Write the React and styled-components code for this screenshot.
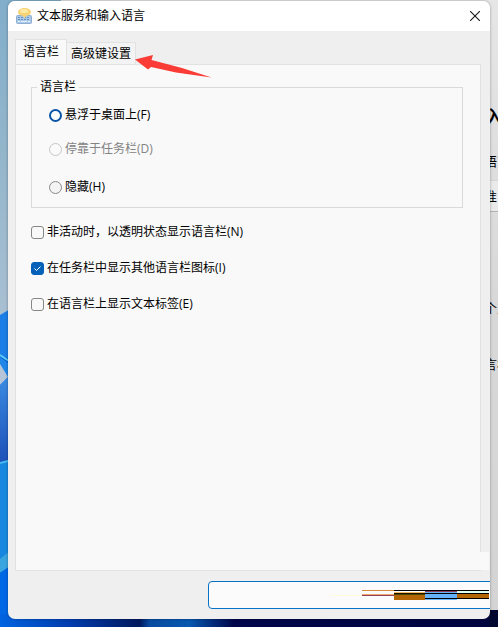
import React, { useState } from "react";
import styled, { createGlobalStyle } from "styled-components";

const GlobalStyle = createGlobalStyle`
  * {
    box-sizing: border-box;
  }
  body {
    margin: 0;
    font: 12px/16px "Open Sans", "Noto Sans CJK SC", sans-serif;
    color: #000;
  }
`;

const Desktop = styled.div`
  position: relative;
  display: flex;
  height: 100vh;
  min-height: 480px;
  padding: 1px 8px 8px;
  overflow: hidden;
  background: #0058d8;
`;

const WallpaperArt = styled.svg`
  position: absolute;
  inset: 0;
  width: 100%;
  height: 100%;
`;

// the settings window behind the dialog

const SettingsWindow = styled.div`
  position: absolute;
  top: 0;
  right: 0;
  bottom: 17px;
  left: 61px;
  display: flex;
  flex-direction: column;
  align-items: flex-end;
  overflow: hidden;
  background: linear-gradient(to bottom, #e6e6e6 0%, #d8d8d8 50%, #d4d4d4 100%);
`;

const SettingsText = styled.span`
  width: 14px;
  margin-top: ${(props) => props.$gap || 0}px;
  font-size: 13px;
  line-height: 20px;
  white-space: nowrap;
`;

const SettingsHeading = styled(SettingsText)`
  width: 14px;
  font-size: 20px;
  font-weight: 500;
  line-height: 28px;
`;

const SettingsField = styled.div`
  display: flex;
  justify-content: flex-end;
  align-items: center;
  width: 60px;
  height: 32px;
  margin-top: 9px;
  background: #eaeaea;
  border-top: 1px solid #d4d4d4;
  border-bottom: 1px solid #b4b4b4;
`;

// dialog

const Dialog = styled.section`
  position: relative;
  display: flex;
  flex: 1;
  flex-direction: column;
  overflow: hidden;
  background: #efefef;
  border-radius: 7px;
  box-shadow: 0 0 3px rgba(0, 0, 0, 0.35);
`;

const TitleBar = styled.header`
  display: flex;
  align-items: center;
  height: 30px;
  padding: 0 8px;
  background: #fff;
`;

const Title = styled.h1`
  flex: 1;
  margin: 0 0 0 5px;
  font-size: 12px;
  font-weight: 400;
`;

const CloseButton = styled.button`
  display: flex;
  padding: 2px;
  background: none;
  border: 0;
`;

const TabList = styled.div`
  position: relative;
  display: flex;
  align-items: flex-end;
  height: 33px;
  margin: 0 7px;
`;

const Tab = styled.button`
  height: ${(props) => (props.$active ? 25 : 22)}px;
  padding: ${(props) => (props.$active ? "0 7px 1px" : "0 4px")};
  background: ${(props) => (props.$active ? "#f9f9f9" : "#f3f3f3")};
  border: 1px solid #e2e2e2;
  border-bottom: 0;
  border-left-width: ${(props) => (props.$active ? 1 : 0)}px;
  color: inherit;
  font: inherit;
`;

const Pointer = styled.svg`
  position: absolute;
  top: 22px;
  left: 119px;
  z-index: 1;
`;

const TabPanel = styled.div`
  position: relative;
  flex: 1;
  margin: 0 9px 0 7px;
  padding: 14px 17px 0 15px;
  background: #f9f9f9;
  border: 1px solid #e2e2e2;

  &::after {
    content: "";
    position: absolute;
    right: -9px;
    bottom: 0;
    width: 9px;
    height: 18px;
    background: #f9f9f9;
  }
`;

const Group = styled.fieldset`
  display: flex;
  flex-direction: column;
  margin: 0;
  padding: 12px 17px 12px;
  border: 1px solid #dadada;
`;

const Legend = styled.legend`
  margin-left: -12px;
  padding: 0 3px;
`;

const Option = styled.label`
  display: flex;
  align-items: center;
  gap: 3px;
  height: 16px;
  margin-top: ${(props) => props.$gap || 0}px;
  color: ${(props) => (props.$disabled ? "#838383" : "#000")};
`;

const Radio = styled.input`
  appearance: none;
  width: 13px;
  height: 13px;
  margin: 0;
  background: #f4f4f4;
  border: 1px solid #8a8a8a;
  border-radius: 50%;

  &:checked {
    background: #fff;
    border: 2px solid #0a55a8;
  }
  &:disabled {
    background: #fafafa;
    border-color: #c6c6c6;
  }
`;

const CheckList = styled.div`
  display: flex;
  flex-direction: column;
  gap: 20px;
  margin-top: 16px;
`;

const CheckWrap = styled.span`
  position: relative;
  display: flex;
`;

const CheckInput = styled.input`
  appearance: none;
  width: 13px;
  height: 13px;
  margin: 0;
  background: #f8f8f8;
  border: 1px solid #868686;
  border-radius: 3px;

  &:checked {
    background: #0662b8;
    border-color: #0662b8;
  }
`;

const CheckMark = styled.svg`
  position: absolute;
  inset: 0;
  pointer-events: none;
`;

const Footer = styled.footer`
  display: flex;
  padding: 10px 0;
`;

const ActionButton = styled.button`
  display: flex;
  flex: 1;
  justify-content: flex-end;
  align-items: flex-start;
  height: 28px;
  margin: 0 -4px 0 200px;
  padding: 8px 4px 0 0;
  background: #fbfbfb;
  border: 1px solid #0872c4;
  border-radius: 4px;
`;

// data

const positions = [
  { id: "float", text: "悬浮于桌面上(F)" },
  { id: "dock", text: "停靠于任务栏(D)", disabled: true, gap: 18 },
  { id: "hidden", text: "隐藏(H)", gap: 22 },
];

const checks = [
  { id: "transparent", text: "非活动时，以透明状态显示语言栏(N)" },
  { id: "icons", text: "在任务栏中显示其他语言栏图标(I)" },
  { id: "labels", text: "在语言栏上显示文本标签(E)" },
];

const Wallpaper = () => (
  <WallpaperArt viewBox="0 0 498 627" preserveAspectRatio="none" aria-hidden="true">
    <defs>
      <linearGradient id="sky" x1="0" y1="0" x2="0" y2="1">
        <stop offset="0" stopColor="#82aecb" />
        <stop offset="0.5" stopColor="#94b6cb" />
        <stop offset="1" stopColor="#a9bfd2" />
      </linearGradient>
      <linearGradient id="petal" x1="0" y1="0" x2="0" y2="1">
        <stop offset="0" stopColor="#3a8be2" />
        <stop offset="1" stopColor="#1c4fb8" />
      </linearGradient>
      <linearGradient id="floor" x1="0" y1="0" x2="1" y2="0">
        <stop offset="0" stopColor="#0064e0" />
        <stop offset="0.14" stopColor="#003cae" />
        <stop offset="0.28" stopColor="#00195e" />
        <stop offset="0.3" stopColor="#0a4aa0" />
        <stop offset="0.38" stopColor="#0758b0" />
        <stop offset="0.47" stopColor="#00064a" />
        <stop offset="1" stopColor="#00053f" />
      </linearGradient>
    </defs>
    <rect width="498" height="315" fill="url(#sky)" />
    <path d="M0 315L12 308V360L0 355Z" fill="#1b7de6" />
    <path d="M0 355L12 363" stroke="#5ecdf0" strokeWidth="2" />
    <path d="M0 357L12 366V382L0 386Z" fill="#2087e8" />
    <path d="M0 364L8 377L0 385Z" fill="#b6c5d8" />
    <path d="M0 385L8 377L12 380V460L0 464Z" fill="url(#petal)" />
    <path d="M0 463L12 459V552L0 561Z" fill="#1787df" />
    <path d="M0 463L12 460" stroke="#46b9ee" strokeWidth="2" />
    <path d="M0 559L12 549V565L0 573Z" fill="#3ba5df" />
    <path d="M0 573L12 565V627H0Z" fill="#0067e5" />
    <rect y="614" width="498" height="13" fill="url(#floor)" />
    <path d="M489 609H498V627H489Z" fill="#00082f" />
  </WallpaperArt>
);

const KeyboardIcon = () => (
  <svg width="16" height="16" viewBox="0 0 16 16" aria-hidden="true">
    <rect x="0.5" y="7.5" width="15" height="8" rx="1" fill="#aac9e8" stroke="#8fadd0" />
    <path d="M2 9.5H14M2 11.5H14" stroke="#6690c2" strokeDasharray="2 1" />
    <path d="M2 13.5H4M5 13.5H11M12 13.5H14" stroke="#e6f0fb" />
    <path
      d="M8.500 0C12.500 0 15 1.800 15 4.200C15 6.400 12.500 7.700 10 7.900L8.500 10.500L7 7.800C4 7.600 2 6.300 2 4.200C2 1.800 5 0 8.500 0Z"
      fill="#f8d475"
    />
    <ellipse cx="8" cy="3" rx="4" ry="2" fill="#fdeaa6" />
  </svg>
);

const GlitchStripes = () => (
  <svg width="159" height="12" viewBox="0 0 159 12" shapeRendering="crispEdges" aria-hidden="true">
    <path d="M0 5.500H32" stroke="#fdfbdc" />
    <path d="M32 0.500H64" stroke="#d98a35" />
    <path d="M32 4.500H64" stroke="#f1a66c" />
    <path d="M32 5.500H64" stroke="#924158" />
    <path d="M64 0.500H159" stroke="#000" />
    <path d="M64 1.500H95" stroke="#fff" />
    <path d="M64 2.500H95" stroke="#f5bb66" />
    <path d="M64 3.500H95" stroke="#1c1200" />
    <path d="M64 4.500H95" stroke="#4a4800" />
    <rect x="64" y="5" width="31" height="5" fill="#b46604" />
    <rect x="95" y="1" width="32" height="9" fill="#65b2fb" />
    <path d="M95 1.500H127" stroke="#8d3d5d" />
    <rect x="127" y="1" width="32" height="2" fill="#dcfff0" />
    <rect x="127" y="4" width="32" height="4" fill="#b46604" />
    <path d="M95 3.500H159M95 8.500H159" stroke="#000" />
  </svg>
);

const App = () => {
  const [position, setPosition] = useState("float");
  const [checked, setChecked] = useState({ icons: true });
  const [tab, setTab] = useState("bar");

  const toggle = (id) => setChecked({ ...checked, [id]: !checked[id] });

  return (
    <Desktop>
      <GlobalStyle />
      <Wallpaper />
      <SettingsWindow>
        <SettingsHeading $gap={104}>入</SettingsHeading>
        <SettingsText $gap={19}>语言</SettingsText>
        <SettingsField>
          <SettingsText>准</SettingsText>
        </SettingsField>
        <SettingsText $gap={86}>个人</SettingsText>
        <SettingsText $gap={36}>言栏</SettingsText>
      </SettingsWindow>

      <Dialog role="dialog" aria-labelledby="dialog-title">
        <TitleBar>
          <KeyboardIcon />
          <Title id="dialog-title">文本服务和输入语言</Title>
          <CloseButton aria-label="关闭">
            <svg width="10" height="10" viewBox="0 0 10 10" stroke="#1a1a1a" strokeWidth="1.1">
              <path d="M0 0L10 10M10 0L0 10" />
            </svg>
          </CloseButton>
        </TitleBar>

        <TabList role="tablist">
          <Tab role="tab" aria-selected={tab === "bar"} $active={tab === "bar"} onClick={() => setTab("bar")}>
            语言栏
          </Tab>
          <Tab role="tab" aria-selected={tab === "keys"} $active={tab === "keys"} onClick={() => setTab("keys")}>
            高级键设置
          </Tab>
          <Pointer width="80" height="26" viewBox="0 0 80 26" aria-hidden="true">
            <path d="M1 6.500L19 2L17.500 7L48 15L77.500 24.500L42 19.500L17 14L14 16.500Z" fill="#fb3b35" />
          </Pointer>
        </TabList>

        <TabPanel role="tabpanel">
          <Group>
            <Legend>语言栏</Legend>
            {positions.map((item) => (
              <Option key={item.id} $gap={item.gap} $disabled={item.disabled}>
                <Radio
                  type="radio"
                  name="position"
                  checked={position === item.id}
                  disabled={item.disabled}
                  onChange={() => setPosition(item.id)}
                />
                {item.text}
              </Option>
            ))}
          </Group>

          <CheckList>
            {checks.map((item) => (
              <Option key={item.id}>
                <CheckWrap>
                  <CheckInput type="checkbox" checked={!!checked[item.id]} onChange={() => toggle(item.id)} />
                  {checked[item.id] && (
                    <CheckMark width="13" height="13" viewBox="0 0 13 13" fill="none" stroke="#fff">
                      <path d="M3.500 6.500L5.500 8.500L9.500 4.500" />
                    </CheckMark>
                  )}
                </CheckWrap>
                {item.text}
              </Option>
            ))}
          </CheckList>
        </TabPanel>

        <Footer>
          <ActionButton aria-label="确定">
            <GlitchStripes />
          </ActionButton>
        </Footer>
      </Dialog>
    </Desktop>
  );
};

export default App;
